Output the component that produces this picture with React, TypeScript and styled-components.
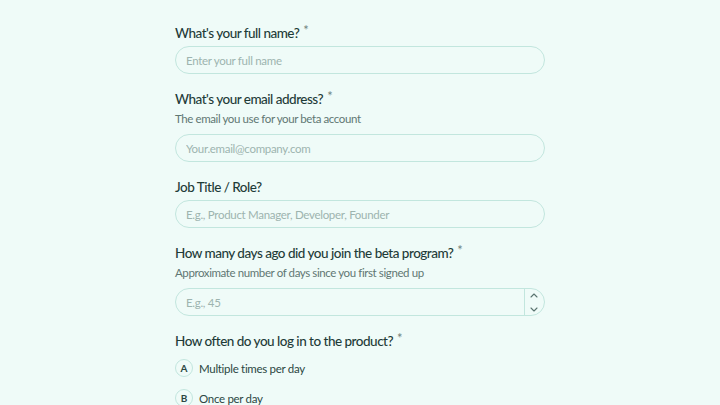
import React from 'react';
import styled, { createGlobalStyle } from 'styled-components';

const GlobalStyle = createGlobalStyle`
  html, body {
    margin: 0;
    padding: 0;
    background: #effbf8;
  }
  body {
    font-family: 'Lato', 'Noto Sans', sans-serif;
  }
`;

const Page = styled.main`
  width: 370px;
  margin: 0 auto;
  padding-top: 22px;
  display: flex;
  flex-direction: column;
`;

const Question = styled.section`
  display: flex;
  flex-direction: column;
  margin-bottom: 14px;
`;

const Label = styled.label<{ $tight?: boolean }>`
  padding-top: 1px;
  font-size: 13.5px;
  font-weight: 500;
  letter-spacing: -0.5px;
  line-height: 20px;
  color: #1f3b38;
  margin-bottom: ${(p) => (p.$tight ? '1px' : '3px')};
`;

const Star = styled.span`
  color: #6f8380;
  font-size: 13px;
  font-weight: 400;
  vertical-align: top;
  position: relative;
  top: -3px;
  margin-left: 4px;
`;

const Hint = styled.p`
  margin: 0 0 6px;
  font-size: 11.5px;
  letter-spacing: -0.4px;
  line-height: 18px;
  color: #5f7773;
`;

const Field = styled.div`
  display: flex;
  height: 28px;
  border: 1px solid #c2e6de;
  border-radius: 15px;
  background: #effbf8;
  box-sizing: border-box;
  overflow: hidden;
`;

const Input = styled.input`
  flex: 1;
  border: none;
  outline: none;
  background: transparent;
  padding: 0 10px;
  font-family: inherit;
  font-size: 11.5px;
  letter-spacing: -0.3px;
  color: #1f3b38;
  &::placeholder {
    color: #9db4af;
  }
`;

const Spinner = styled.div`
  width: 18px;
  border-left: 1px solid #c2e6de;
  display: flex;
  flex-direction: column;
  align-items: center;
  justify-content: center;
  gap: 9px;
  padding-right: 1px;
`;

const Options = styled.div`
  display: flex;
  flex-direction: column;
  gap: 12px;
  margin-top: 5px;
`;

const Option = styled.div`
  display: flex;
  align-items: center;
  gap: 6px;
  font-size: 11.5px;
  letter-spacing: -0.3px;
  color: #2b4743;
`;

const Key = styled.span`
  width: 18px;
  height: 18px;
  box-sizing: border-box;
  border-radius: 50%;
  border: 1px solid #c2e6de;
  display: flex;
  align-items: center;
  justify-content: center;
  font-size: 10px;
  font-weight: 700;
  letter-spacing: 0;
  color: #2b4743;
`;

const Chevron = ({ up }: { up?: boolean }) => (
  <svg width="8" height="5" viewBox="0 0 8 5" fill="none">
    <path
      d={up ? 'M1 4L4 1L7 4' : 'M1 1L4 4L7 1'}
      stroke="#5a7470"
      strokeWidth="1.1"
      strokeLinecap="round"
      strokeLinejoin="round"
    />
  </svg>
);

const App = () => {
  return (
    <>
      <GlobalStyle />
      <Page>
        <Question>
          <Label>
            What's your full name?<Star>*</Star>
          </Label>
          <Field>
            <Input placeholder="Enter your full name" />
          </Field>
        </Question>

        <Question>
          <Label $tight>
            What's your email address?<Star>*</Star>
          </Label>
          <Hint>The email you use for your beta account</Hint>
          <Field>
            <Input placeholder="Your.email@company.com" />
          </Field>
        </Question>

        <Question>
          <Label>Job Title / Role?</Label>
          <Field>
            <Input placeholder="E.g., Product Manager, Developer, Founder" />
          </Field>
        </Question>

        <Question>
          <Label $tight>
            How many days ago did you join the beta program?<Star>*</Star>
          </Label>
          <Hint>Approximate number of days since you first signed up</Hint>
          <Field>
            <Input placeholder="E.g., 45" />
            <Spinner>
              <Chevron up />
              <Chevron />
            </Spinner>
          </Field>
        </Question>

        <Question>
          <Label>
            How often do you log in to the product?<Star>*</Star>
          </Label>
          <Options>
            <Option>
              <Key>A</Key>
              Multiple times per day
            </Option>
            <Option>
              <Key>B</Key>
              Once per day
            </Option>
          </Options>
        </Question>
      </Page>
    </>
  );
};

export default App;
